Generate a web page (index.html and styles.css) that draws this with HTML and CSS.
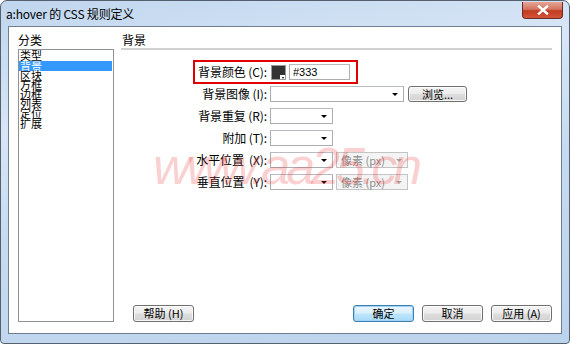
FILE: index.html
```html
<!DOCTYPE html>
<html lang="zh-CN">
<head>
<meta charset="utf-8">
<title>a:hover 的 CSS 规则定义</title>
<link rel="stylesheet" href="styles.css">
</head>
<body>
<div class="window">
  <div class="titlebar">
    <span class="title">a:hover 的 CSS 规则定义</span>
    <div class="close"><svg width="12" height="10" viewBox="0 0 12 10"><path d="M2 1.5 L10 8.5 M10 1.5 L2 8.5" stroke="#fff" stroke-width="2.4" stroke-linecap="square"/></svg></div>
  </div>
  <div class="client">
    <div class="cat">
      <div class="cat-label">分类</div>
      <div class="list">
        <div class="item">类型</div>
        <div class="item sel">背景</div>
        <div class="item">区块</div>
        <div class="item">方框</div>
        <div class="item">边框</div>
        <div class="item">列表</div>
        <div class="item">定位</div>
        <div class="item">扩展</div>
      </div>
    </div>
    <div class="panel">
      <div class="panel-title">背景</div>
      <div class="rule"></div>
      <div class="form">
        <div class="lbl">背景颜色 (C):</div>
        <div class="ctrls">
          <div class="swatch"></div>
          <div class="input color-in">#333</div>
        </div>
        <div class="lbl">背景图像 (I):</div>
        <div class="ctrls">
          <div class="input combo wide"></div>
          <div class="btn browse">浏览...</div>
        </div>
        <div class="lbl">背景重复 (R):</div>
        <div class="ctrls"><div class="input combo"></div></div>
        <div class="lbl">附加 (T):</div>
        <div class="ctrls"><div class="input combo"></div></div>
        <div class="lbl">水平位置&nbsp; (X):</div>
        <div class="ctrls"><div class="input combo"></div><div class="input combo unit">像素 (px)</div></div>
        <div class="lbl">垂直位置&nbsp; (Y):</div>
        <div class="ctrls"><div class="input combo"></div><div class="input combo unit">像素 (px)</div></div>
      </div>
      <div class="buttons">
        <div class="btn">帮助 (H)</div>
        <div class="right">
          <div class="btn default">确定</div>
          <div class="btn">取消</div>
          <div class="btn">应用 (A)</div>
        </div>
      </div>
    </div>
  </div>
  <div class="mark"></div>
  <div class="watermark">www.aa25.cn</div>
</div>
</body>
</html>
```
FILE: styles.css
```css
* { box-sizing: border-box; }
html, body { margin: 0; padding: 0; }
body {
  width: 570px;
  height: 344px;
  overflow: hidden;
  background: #fff;
  font-family: "Noto Sans CJK SC", "Liberation Sans", sans-serif;
  font-size: 12px;
  color: #000;
}
.window {
  position: relative;
  width: 570px;
  height: 344px;
  display: flex;
  flex-direction: column;
  padding: 0 7px 9px 7px;
  border: 1px solid #55606e;
  border-radius: 7px 7px 4px 4px;
  background: linear-gradient(170deg, #c0d6ee 0%, #d8e6f6 30%, #c6dbf0 55%, #bcd3ec 100%);
}
.titlebar {
  height: 25px;
  display: flex;
  align-items: flex-start;
  justify-content: space-between;
}
.title {
  margin: 5px 0 0 -2px;
  font-size: 12px;
  line-height: 16px;
  letter-spacing: -0.2px;
}
.close {
  width: 41px;
  height: 17px;
  margin: 1px -1px 0 0;
  border: 1px solid #6d2a24;
  border-top: none;
  border-radius: 0 0 4px 4px;
  background: linear-gradient(to bottom, #e6a595 0%, #d47561 45%, #c23a21 55%, #d0563a 100%);
  display: flex;
  align-items: center;
  justify-content: center;
}
.client {
  flex: 1;
  display: flex;
  gap: 8px;
  padding: 6px 9px 11px 9px;
  background: #fff;
  border: 1px solid #6f7e90;
}
.cat {
  width: 96px;
  display: flex;
  flex-direction: column;
}
.cat-label, .panel-title {
  line-height: 14px;
  height: 14px;
  font-size: 12px;
}
.list {
  flex: 1;
  margin-top: 2px;
  border: 1px solid #8e9196;
  padding-top: 1px;
  font-size: 11px;
}
.item {
  height: 9.6px;
  line-height: 9.6px;
  padding-left: 1px;
  margin-right: 1px;
  white-space: nowrap;
}
.item.sel {
  background: #3399ff;
  color: #fff;
  height: 10px;
  line-height: 10px;
}
.panel {
  flex: 1;
  display: flex;
  flex-direction: column;
}
.rule {
  height: 2px;
  margin: 1px 0 0 -1px;
  background: #d0d0d0;
}
.form {
  margin-top: 14px;
  display: grid;
  grid-template-columns: 145px auto;
  column-gap: 3px;
  row-gap: 6px;
  align-items: center;
  justify-content: start;
}
.lbl {
  text-align: right;
  font-size: 12px;
  line-height: 16px;
  white-space: nowrap;
  letter-spacing: -0.1px;
}
.ctrls {
  display: flex;
  gap: 3px;
  align-items: center;
  height: 16px;
}
.input {
  height: 16px;
  width: 63px;
  border: 1px solid #abadb3;
  border-top-color: #b8bbc2;
  background: #fff;
  font-size: 11px;
  line-height: 14px;
  padding-left: 3px;
  display: flex;
  align-items: center;
}
.swatch {
  position: relative;
  width: 15px;
  height: 15px;
  margin-left: 1px;
  border: 1px solid #9a9a9a;
  background: #333;
}
.swatch::after {
  content: "";
  position: absolute;
  right: 0;
  bottom: 0;
  width: 5px;
  height: 4px;
  background: #fff;
}
.swatch::before {
  content: "";
  position: absolute;
  right: 1px;
  bottom: 0;
  width: 0;
  height: 0;
  border-left: 1.5px solid transparent;
  border-right: 1.5px solid transparent;
  border-top: 2px solid #000;
  z-index: 1;
}
.color-in {
  width: 61px;
  font-family: "Liberation Sans", sans-serif;
}
.combo {
  justify-content: space-between;
  padding-right: 5px;
}
.combo::after {
  content: "";
  margin-left: auto;
  width: 0;
  height: 0;
  border-left: 3.5px solid transparent;
  border-right: 3.5px solid transparent;
  border-top: 3.5px solid #000;
}
.wide { width: 134px; }
.unit {
  width: 72px;
  background: #f4f4f4;
  border-color: #c4c4c4;
  color: #8d8d8d;
  padding-left: 4px;
}
.unit::after {
  border-top-color: #a8a8a8;
}
.btn {
  width: 61px;
  height: 17px;
  border: 1px solid #707070;
  border-radius: 3px;
  background: linear-gradient(to bottom, #f4f4f4 0%, #ececec 48%, #dedede 52%, #d2d2d2 100%);
  box-shadow: inset 0 0 0 1px rgba(255,255,255,0.8);
  font-size: 11px;
  line-height: 15px;
  text-align: center;
  white-space: nowrap;
}
.browse {
  width: 59px;
  margin-left: 1px;
  height: 16px;
  line-height: 14px;
}
.btn.default {
  border-color: #3c7fb1;
  background: linear-gradient(to bottom, #eaf6fd 0%, #d9f0fc 48%, #bee6fd 52%, #a7d9f5 100%);
  box-shadow: inset 0 0 0 1px #9ed3f5;
}
.buttons {
  margin-top: auto;
  display: flex;
  justify-content: space-between;
  padding-left: 11px;
}
.right {
  display: flex;
  gap: 8px;
}
.mark {
  position: absolute;
  left: 192px;
  top: 59px;
  width: 165px;
  height: 24px;
  border: 2px solid #e00000;
  pointer-events: none;
}
.watermark {
  position: absolute;
  left: 152px;
  top: 135px;
  font-family: "Liberation Sans", sans-serif;
  font-style: italic;
  font-size: 52px;
  letter-spacing: -4px;
  line-height: 60px;
  color: rgba(240, 60, 60, 0.24);
  pointer-events: none;
  white-space: nowrap;
}
```
